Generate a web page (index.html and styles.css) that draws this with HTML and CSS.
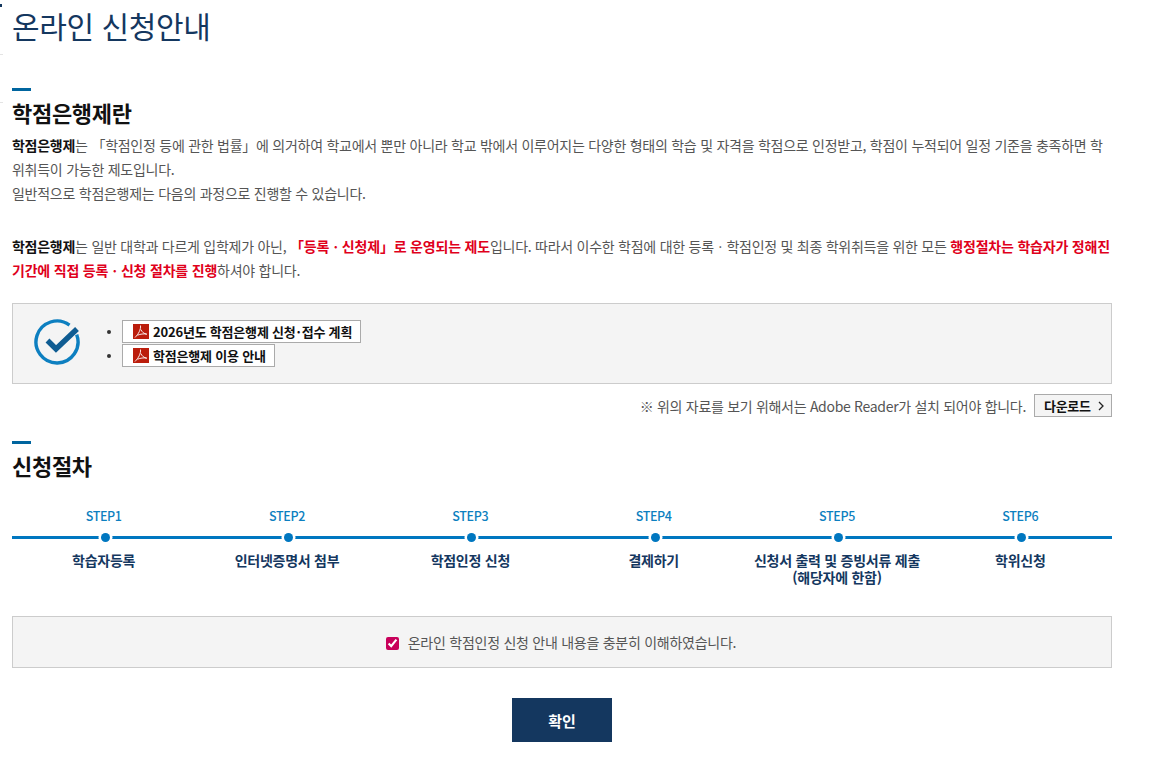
FILE: index.html
```html
<!DOCTYPE html>
<html lang="ko">
  <head>
    <meta charset="UTF-8" />
    <title>온라인 신청안내</title>
    <link rel="stylesheet" href="styles.css">
  </head>
  <body>
    <div class="edge-marks"></div>
    <div class="wrap">
      <h1 class="page-title">온라인 신청안내</h1>

      <h2 class="sec-title">학점은행제란</h2>
      <p class="txt">
        <b>학점은행제</b>는 「학점인정 등에 관한 법률」에 의거하여 학교에서 뿐만 아니라 학교 밖에서 이루어지는 다양한 형태의 학습 및 자격을 학점으로 인정받고, 학점이 누적되어 일정 기준을 충족하면 학위취득이 가능한 제도입니다.<br />
        일반적으로 학점은행제는 다음의 과정으로 진행할 수 있습니다.
      </p>
      <p class="txt txt-gap">
        <b>학점은행제</b>는 일반 대학과 다르게 입학제가 아닌, <b class="red">「등록ㆍ신청제」로 운영되는 제도</b>입니다. 따라서 이수한 학점에 대한 등록ㆍ학점인정 및 최종 학위취득을 위한 모든 <b class="red">행정절차는 학습자가 정해진 기간에 직접 등록ㆍ신청 절차를 진행</b>하셔야 합니다.
      </p>

      <div class="file-box">
        <svg class="check-icon" viewBox="0 0 46 46">
          <path d="M35.5 6.1A21 21 0 1 0 42.7 15.7" fill="none" stroke="#0d7fc0" stroke-width="3.4" />
          <path d="M13.5 21.5l8.5 8.5 21-20" fill="none" stroke="#0f5c92" stroke-width="5.5" />
        </svg>
        <ul class="file-list">
          <li>
            <a class="file-link">
              <svg class="pdf" viewBox="0 0 16 15">
                <rect width="16" height="15" fill="#bb1d0c" />
                <path d="M7.5 1.5C8 5.5 5.5 10 2 13.5M7.8 5.5C9 8 11 9.8 14 10.3M4.5 11.2C7.5 10 10.5 9.7 13.5 10" fill="none" stroke="#fff" stroke-width="0.9" />
              </svg>
              <span>2026년도 학점은행제 신청<span class="mid-dot">·</span>접수 계획</span>
            </a>
          </li>
          <li>
            <a class="file-link">
              <svg class="pdf" viewBox="0 0 16 15">
                <rect width="16" height="15" fill="#bb1d0c" />
                <path d="M7.5 1.5C8 5.5 5.5 10 2 13.5M7.8 5.5C9 8 11 9.8 14 10.3M4.5 11.2C7.5 10 10.5 9.7 13.5 10" fill="none" stroke="#fff" stroke-width="0.9" />
              </svg>
              <span>학점은행제 이용 안내</span>
            </a>
          </li>
        </ul>
      </div>

      <div class="reader-row">
        <span>※ 위의 자료를 보기 위해서는 Adobe Reader가 설치 되어야 합니다.</span>
        <a class="btn-down">다운로드
          <svg viewBox="0 0 8 12"><path d="M2 2l4 4-4 4" fill="none" stroke="#222" stroke-width="1.3" /></svg>
        </a>
      </div>

      <h2 class="sec-title sec-title-2">신청절차</h2>
      <ol class="steps">
        <li><span class="step-no">STEP1</span><span class="step-dot"></span><span class="step-name">학습자등록</span></li>
        <li><span class="step-no">STEP2</span><span class="step-dot"></span><span class="step-name">인터넷증명서 첨부</span></li>
        <li><span class="step-no">STEP3</span><span class="step-dot"></span><span class="step-name">학점인정 신청</span></li>
        <li><span class="step-no">STEP4</span><span class="step-dot"></span><span class="step-name">결제하기</span></li>
        <li><span class="step-no">STEP5</span><span class="step-dot"></span><span class="step-name">신청서 출력 및 증빙서류 제출<br />(해당자에 한함)</span></li>
        <li><span class="step-no">STEP6</span><span class="step-dot"></span><span class="step-name">학위신청</span></li>
      </ol>

      <label class="agree-box">
        <input type="checkbox" checked />
        온라인 학점인정 신청 안내 내용을 충분히 이해하였습니다.
      </label>

      <div class="btn-row">
        <button class="btn-ok">확인</button>
      </div>
    </div>
  </body>
</html>
```

FILE: styles.css
```css
:root {
  --navy: #14375f;
  --blue: #0077c0;
  --line: #cccccc;
  --bg-gray: #f4f4f4;
  --text: #555;
}
html,
body {
  margin: 0;
  background: #fff;
}
body {
  color: var(--text);
  font-family: "Noto Sans CJK KR", "Noto Sans", sans-serif;
  font-size: 14px;
  letter-spacing: -0.26px;
  text-spacing-trim: space-all;
}
.edge-marks {
  position: absolute;
  top: 4px;
  left: 0;
  width: 3px;
  height: 99px;
  background:
    linear-gradient(#14375f, #14375f) 0 0 / 2px 3px no-repeat,
    linear-gradient(#e4e4e4, #e4e4e4) 0 50px / 3px 1px no-repeat,
    linear-gradient(#e4e4e4, #e4e4e4) 0 98px / 3px 1px no-repeat;
}
.wrap {
  width: 1100px;
  padding: 0 0 0 12px;
}
.page-title {
  margin: 0;
  padding-top: 3px;
  height: 84px;
  box-sizing: border-box;
  color: #14375f;
  font-size: 30px;
  font-weight: 400;
  line-height: 44px;
  letter-spacing: -0.4px;
}
.sec-title {
  margin: 0;
  padding-top: 4px;
  color: #111;
  font-size: 22px;
  font-weight: 700;
  line-height: 42px;
  letter-spacing: -0.3px;
}
.sec-title::before {
  content: "";
  display: block;
  width: 19px;
  height: 3px;
  background: #00659f;
}
.txt {
  margin: 0;
  line-height: 24px;
}
.txt b {
  color: #111;
  font-weight: 700;
}
.txt b.red {
  color: #e0001b;
  letter-spacing: -0.2px;
}
.txt-gap {
  margin-top: 29px;
}
.file-box {
  display: flex;
  align-items: center;
  margin-top: 21px;
  height: 81px;
  box-sizing: border-box;
  border: 1px solid var(--line);
  background: var(--bg-gray);
}
.check-icon {
  width: 46px;
  height: 46px;
  margin: 0 0 3px 21px;
}
.file-list {
  margin: 1px 0 0 26px;
  padding: 0 0 0 16px;
  color: #333;
}
.file-list li {
  height: 24px;
}
.file-list li::marker {
  font-size: 11px;
}
.file-link {
  display: inline-flex;
  align-items: center;
  gap: 4px;
  height: 23px;
  padding: 0 8px 0 10px;
  box-sizing: border-box;
  border: 1px solid #aaa;
  background: #fff;
  color: #111;
  font-size: 13px;
  font-weight: 700;
  letter-spacing: -0.2px;
  vertical-align: top;
}
.mid-dot {
  margin: 0 1px;
}
.pdf {
  width: 16px;
  height: 15px;
}
.reader-row {
  display: flex;
  justify-content: flex-end;
  align-items: center;
  gap: 8px;
  margin-top: 10px;
  height: 23px;
  letter-spacing: -0.3px;
}
.btn-down {
  display: flex;
  align-items: center;
  justify-content: space-between;
  width: 78px;
  height: 23px;
  padding: 0 6px 0 9px;
  box-sizing: border-box;
  border: 1px solid #aaa;
  background: #f4f4f4;
  color: #111;
  font-size: 13px;
  font-weight: 700;
}
.btn-down svg {
  width: 8px;
  height: 12px;
}
.sec-title-2 {
  margin-top: 20px;
}
.steps {
  display: grid;
  grid-template-columns: repeat(6, 183.33px);
  margin: 20px 0 0;
  padding: 0;
  list-style: none;
  text-align: center;
}
.steps li {
  display: flex;
  flex-direction: column;
  align-items: center;
  background: linear-gradient(var(--blue), var(--blue)) 0 30px / 100% 3px no-repeat;
}
.step-no {
  height: 27px;
  color: #0d7fc0;
  font-size: 12.5px;
  font-weight: 500;
  line-height: 20px;
  letter-spacing: -0.35px;
}
.step-dot {
  width: 9px;
  height: 9px;
  margin-left: 3px;
  border-radius: 50%;
  background: var(--blue);
  box-shadow: 0 0 0 2.5px #fff;
}
.step-name {
  margin-top: 10px;
  color: #14375f;
  font-size: 14px;
  font-weight: 700;
  line-height: 17px;
}
.agree-box {
  display: flex;
  justify-content: center;
  align-items: center;
  gap: 9px;
  margin-top: 30px;
  padding-right: 2px;
  height: 52px;
  box-sizing: border-box;
  border: 1px solid var(--line);
  background: var(--bg-gray);
}
.agree-box input {
  width: 13px;
  height: 13px;
  margin: 2px 0 0;
  accent-color: #c8005a;
}
.btn-row {
  display: flex;
  justify-content: center;
  margin-top: 30px;
}
.btn-ok {
  width: 100px;
  height: 44px;
  border: 0;
  background: var(--navy);
  color: #fff;
  font-family: inherit;
  font-size: 15px;
  font-weight: 700;
}
```
